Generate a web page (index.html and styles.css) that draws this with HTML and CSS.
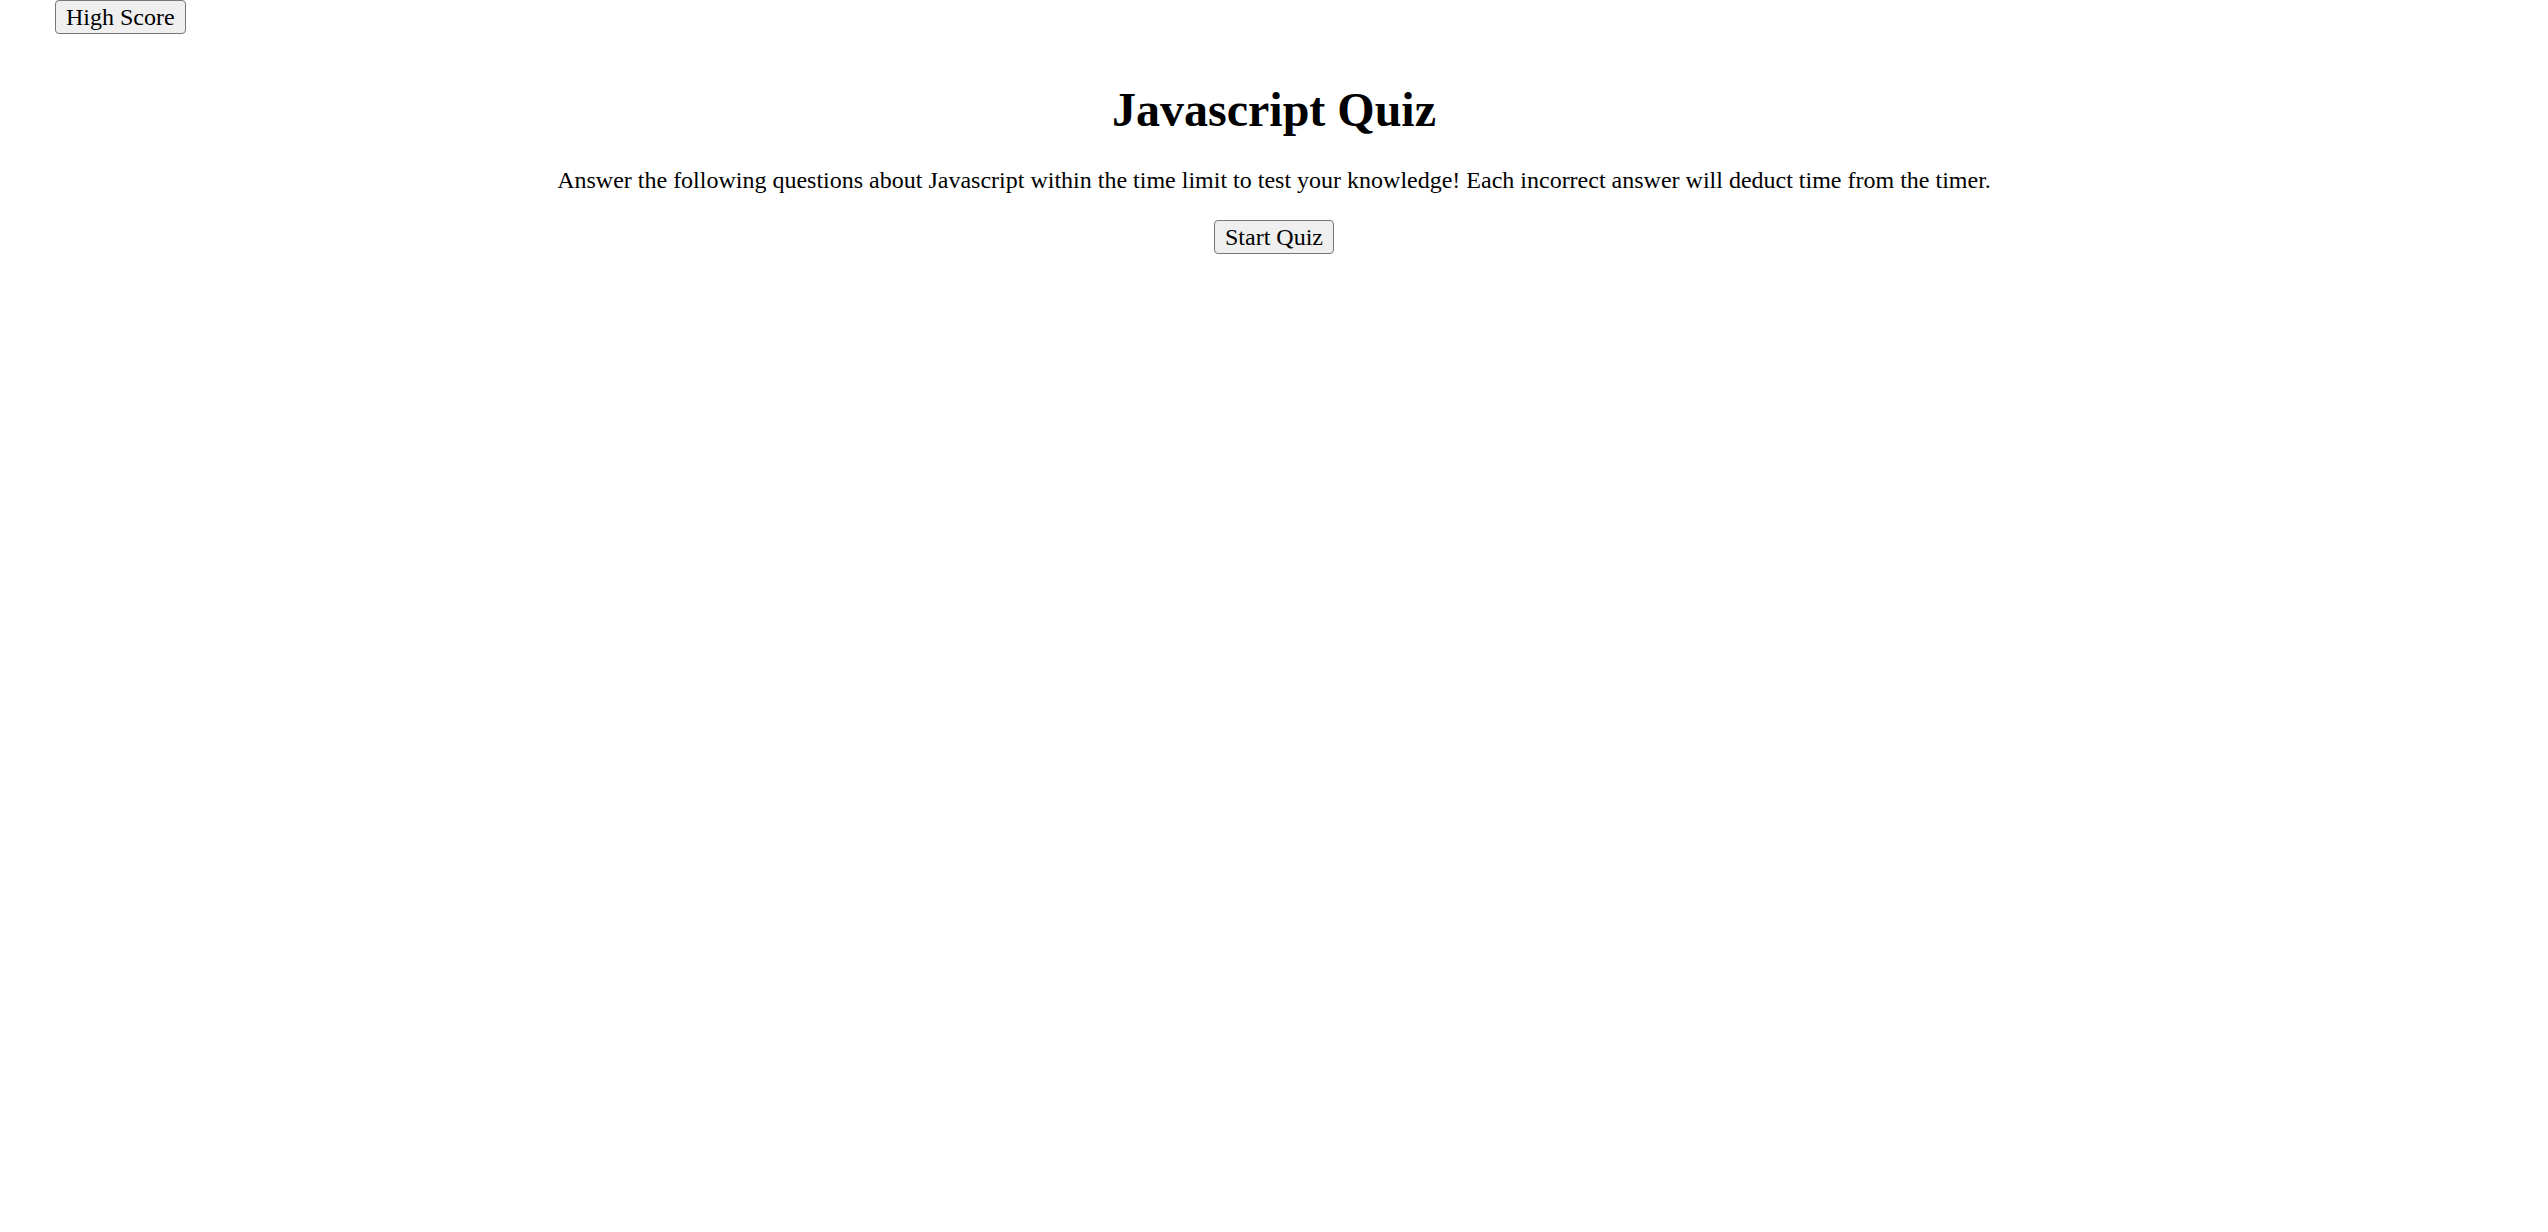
FILE: index.html
```html
<!DOCTYPE html>
<html lang="en">
<head>
<meta charset="utf-8">
<title>Javascript Quiz</title>
<link rel="stylesheet" href="styles.css">
</head>
<body>
<header class="top-bar">
  <button class="btn" type="button">High Score</button>
</header>
<main class="intro">
  <h1 class="intro-title">Javascript Quiz</h1>
  <p class="intro-text">Answer the following questions about Javascript within the time limit to test your knowledge! Each incorrect answer will deduct time from the timer.</p>
  <button class="btn" type="button">Start Quiz</button>
</main>
</body>
</html>
```

FILE: styles.css
```css
html, body {
  margin: 0;
  padding: 0;
  background: #ffffff;
  color: #000000;
  font-family: "Liberation Serif", "Times New Roman", serif;
}

.top-bar {
  display: flex;
  padding-left: 55px;
}

.btn {
  font-family: "Liberation Serif", "Times New Roman", serif;
  font-size: 24px;
  line-height: 29px;
  color: #000000;
  background: #efefef;
  border: 1.5px solid #767676;
  border-radius: 4px;
  padding: 1.5px 10px;
  margin: 0;
  cursor: pointer;
}

.intro {
  display: flex;
  flex-direction: column;
  align-items: center;
  text-align: center;
}

.intro-title {
  font-size: 48px;
  font-weight: bold;
  line-height: 53px;
  margin: 49px 0 0;
}

.intro-text {
  font-size: 24px;
  line-height: 30px;
  margin: 29px 0 25px;
}
```
